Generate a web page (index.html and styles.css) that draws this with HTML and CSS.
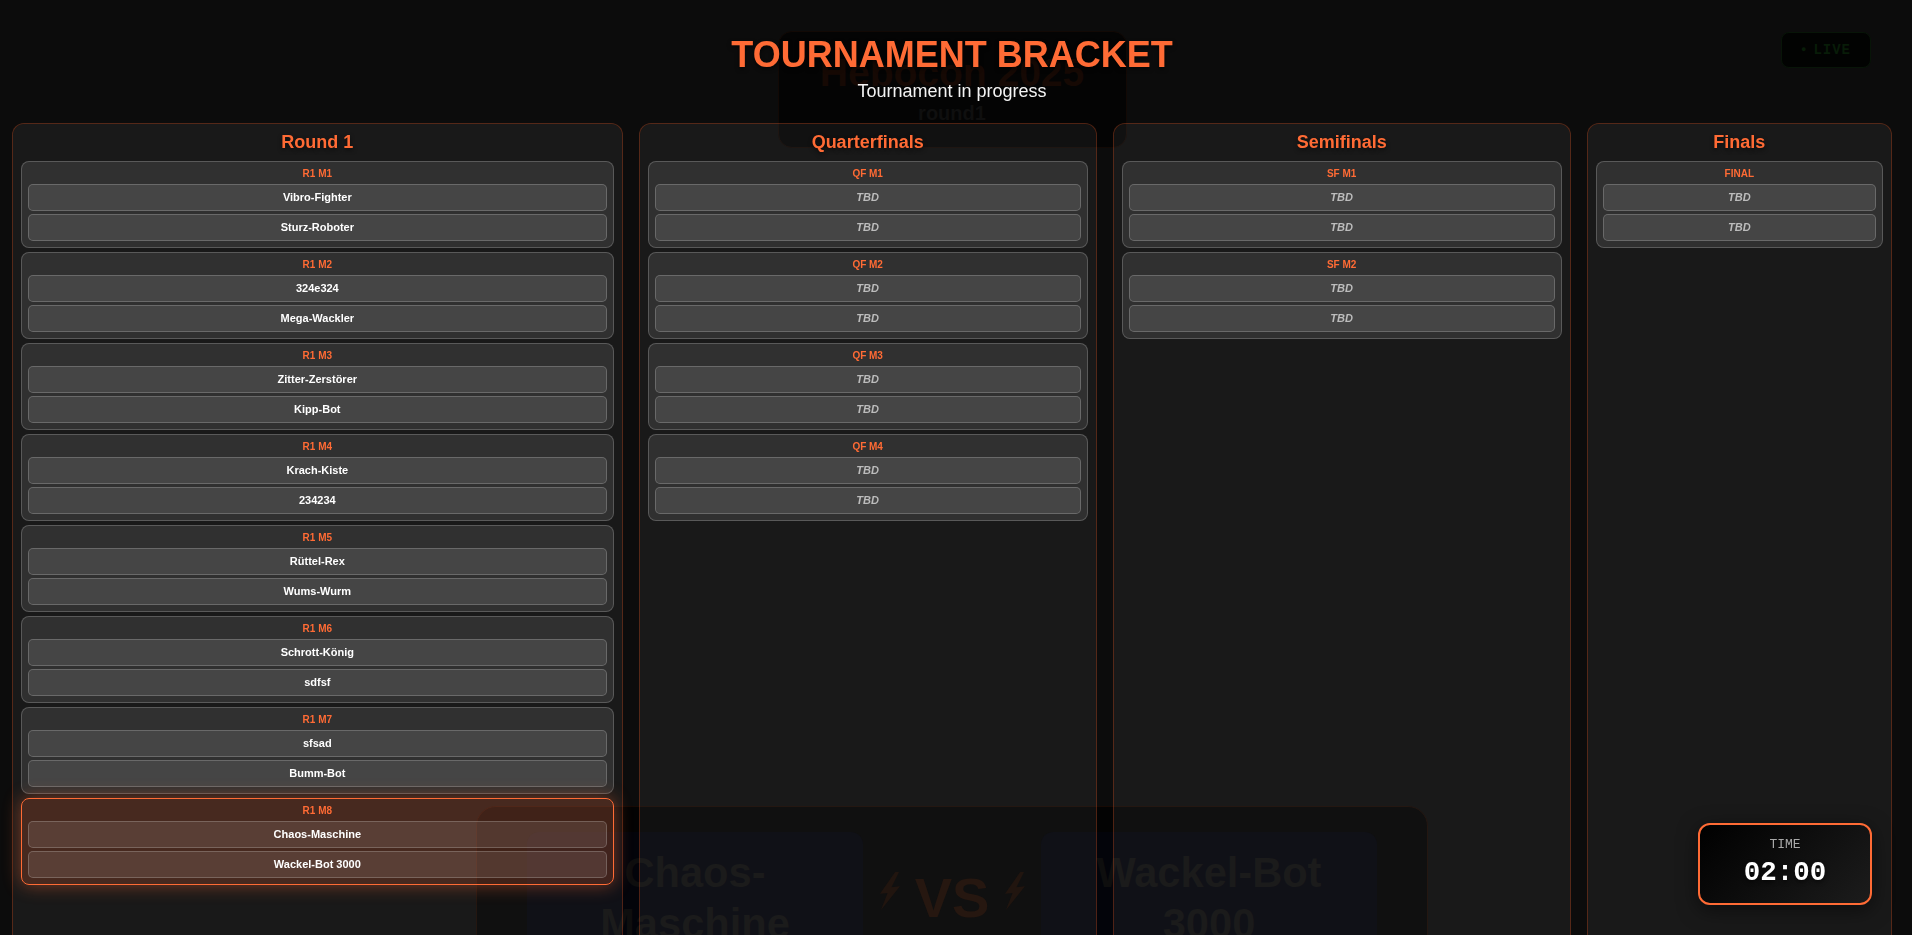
FILE: index.html
```html
<!DOCTYPE html>
<html lang="de">
<head>
<meta charset="utf-8">
<title>Hebocon 2025 – Tournament Bracket</title>
<link rel="stylesheet" href="styles.css">
</head>
<body>
  <div class="stage">
    <div class="live-badge"><span class="live-dot">●</span><span>LIVE</span></div>
    <div class="event-box">
      <div class="event-name">Hebocon 2025</div>
      <div class="event-round">round1</div>
    </div>
    <div class="versus">
      <div class="fighter"><div class="fighter-name">Chaos-Maschine</div></div>
      <div class="vs-mark">
        <svg class="bolt" viewBox="0 0 30 40" aria-hidden="true"><polygon points="21,0 5,23 13,22 6,40 26,15 17,16 25,0"/></svg>
        <span class="vs-text">VS</span>
        <svg class="bolt" viewBox="0 0 30 40" aria-hidden="true"><polygon points="21,0 5,23 13,22 6,40 26,15 17,16 25,0"/></svg>
      </div>
      <div class="fighter"><div class="fighter-name">Wackel-Bot 3000</div></div>
    </div>
  </div>

  <div class="overlay">
    <header class="bracket-header">
      <h1 class="bracket-title">TOURNAMENT BRACKET</h1>
      <p class="bracket-status">Tournament in progress</p>
    </header>
    <div class="bracket">
      <section class="round">
        <h2 class="round-title">Round 1</h2>
        <div class="match"><div class="match-label">R1 M1</div><div class="slot">Vibro-Fighter</div><div class="slot">Sturz-Roboter</div></div>
        <div class="match"><div class="match-label">R1 M2</div><div class="slot">324e324</div><div class="slot">Mega-Wackler</div></div>
        <div class="match"><div class="match-label">R1 M3</div><div class="slot">Zitter-Zerstörer</div><div class="slot">Kipp-Bot</div></div>
        <div class="match"><div class="match-label">R1 M4</div><div class="slot">Krach-Kiste</div><div class="slot">234234</div></div>
        <div class="match"><div class="match-label">R1 M5</div><div class="slot">Rüttel-Rex</div><div class="slot">Wums-Wurm</div></div>
        <div class="match"><div class="match-label">R1 M6</div><div class="slot">Schrott-König</div><div class="slot">sdfsf</div></div>
        <div class="match"><div class="match-label">R1 M7</div><div class="slot">sfsad</div><div class="slot">Bumm-Bot</div></div>
        <div class="match match-active"><div class="match-label">R1 M8</div><div class="slot">Chaos-Maschine</div><div class="slot">Wackel-Bot 3000</div></div>
      </section>
      <section class="round">
        <h2 class="round-title">Quarterfinals</h2>
        <div class="match"><div class="match-label">QF M1</div><div class="slot slot-tbd">TBD</div><div class="slot slot-tbd">TBD</div></div>
        <div class="match"><div class="match-label">QF M2</div><div class="slot slot-tbd">TBD</div><div class="slot slot-tbd">TBD</div></div>
        <div class="match"><div class="match-label">QF M3</div><div class="slot slot-tbd">TBD</div><div class="slot slot-tbd">TBD</div></div>
        <div class="match"><div class="match-label">QF M4</div><div class="slot slot-tbd">TBD</div><div class="slot slot-tbd">TBD</div></div>
      </section>
      <section class="round">
        <h2 class="round-title">Semifinals</h2>
        <div class="match"><div class="match-label">SF M1</div><div class="slot slot-tbd">TBD</div><div class="slot slot-tbd">TBD</div></div>
        <div class="match"><div class="match-label">SF M2</div><div class="slot slot-tbd">TBD</div><div class="slot slot-tbd">TBD</div></div>
      </section>
      <section class="round">
        <h2 class="round-title">Finals</h2>
        <div class="match"><div class="match-label">FINAL</div><div class="slot slot-tbd">TBD</div><div class="slot slot-tbd">TBD</div></div>
      </section>
    </div>
  </div>

  <div class="timer">
    <div class="timer-label">TIME</div>
    <div class="timer-value">02:00</div>
  </div>
</body>
</html>
```

FILE: styles.css
```css
* { box-sizing: border-box; }

html, body {
  margin: 0;
  height: 100%;
}

body {
  background: #0c0c0c;
  color: #fff;
  font-family: "Liberation Sans", Arial, sans-serif;
  overflow: hidden;
}

/* ---------- dimmed main screen underneath ---------- */
.stage {
  position: relative;
  width: calc(100% - 8px);
  height: 100vh;
  display: flex;
  flex-direction: column;
  align-items: center;
}

.live-badge {
  position: absolute;
  top: 32px;
  right: 33px;
  width: 90px;
  height: 36px;
  display: flex;
  align-items: center;
  justify-content: center;
  gap: 6px;
  border: 1px solid #081508;
  border-radius: 8px;
  background: #020302;
  color: #081c08;
  font-family: "Liberation Mono", monospace;
  font-size: 14px;
  font-weight: bold;
  letter-spacing: 1px;
}

.live-dot { font-size: 9px; }

.event-box {
  flex-shrink: 0;
  margin-top: 31px;
  width: 349px;
  height: 117px;
  padding-top: 18px;
  border: 1px solid #120905;
  border-radius: 14px;
  background: #040404;
  text-align: center;
}

.event-name {
  font-size: 39px;
  line-height: 46px;
  font-weight: bold;
  color: #160904;
  margin-bottom: 5px;
}

.event-round {
  font-size: 20px;
  line-height: 24px;
  font-weight: bold;
  color: #0f0f0f;
}

.versus {
  flex-shrink: 0;
  margin-top: 658px;
  width: 952px;
  height: 320px;
  display: flex;
  padding: 25px 50px;
  border: 1px solid #180a04;
  border-radius: 20px;
  background: #030303;
}

.fighter {
  width: 336px;
  padding: 15px 20px;
  border-radius: 12px;
  background: #03040a;
  text-align: center;
}

.fighter-name {
  font-size: 41.6px;
  line-height: 51px;
  font-weight: bold;
  color: #0e0e0e;
}

.vs-mark {
  flex: 1;
  display: flex;
  justify-content: center;
  align-items: flex-start;
  gap: 11px;
  padding-top: 34px;
}

.vs-text {
  font-size: 56px;
  line-height: 64px;
  font-weight: bold;
  color: #1a0a03;
}

.bolt {
  width: 29px;
  height: 38px;
  margin-top: 6px;
  fill: #150802;
}

/* ---------- bracket overlay ---------- */
.overlay {
  position: fixed;
  inset: 0;
  z-index: 10;
  display: flex;
  flex-direction: column;
  padding: 34px 20px 0 12px;
  overflow: hidden;
}

.bracket-header {
  text-align: center;
  margin-bottom: 21px;
}

.bracket-title {
  margin: 0 0 4px;
  font-size: 36px;
  line-height: 42px;
  font-weight: bold;
  color: #ff6b35;
  text-shadow: 0 2px 4px rgba(0, 0, 0, 0.6);
}

.bracket-status {
  margin: 0;
  font-size: 18px;
  line-height: 22px;
  color: #f4f4f4;
}

.bracket {
  display: grid;
  grid-template-columns: 2fr 1.5fr 1.5fr 1fr;
  gap: 16px;
  height: 840px;
  flex-shrink: 0;
}

.round {
  min-width: 0;
  padding: 8px;
  border: 1px solid rgba(255, 107, 53, 0.3);
  border-radius: 12px;
  background: rgba(255, 255, 255, 0.055);
  background-clip: padding-box;
}

.round-title {
  margin: 0 0 9px;
  text-align: center;
  font-size: 18px;
  line-height: 20px;
  font-weight: bold;
  color: #ff6b35;
  text-shadow: 0 2px 4px rgba(0, 0, 0, 0.5);
}

.match {
  margin-bottom: 4px;
  padding: 6px;
  border: 1px solid rgba(255, 255, 255, 0.2);
  border-radius: 8px;
  background: rgba(255, 255, 255, 0.1);
}

.match-label {
  margin-bottom: 4px;
  text-align: center;
  font-size: 10px;
  line-height: 12px;
  font-weight: bold;
  color: #ff6b35;
}

.slot {
  padding: 6px;
  border: 1px solid rgba(255, 255, 255, 0.2);
  border-radius: 5px;
  background: rgba(255, 255, 255, 0.1);
  text-align: center;
  font-size: 11px;
  line-height: 13px;
  font-weight: bold;
  color: #fff;
}

.slot + .slot { margin-top: 3px; }

.slot-tbd {
  font-style: italic;
  color: #bcbcbc;
}

.match-active {
  border-color: #ff6b35;
  background: rgba(255, 107, 53, 0.2);
  box-shadow: 0 0 18px rgba(255, 107, 53, 0.45);
}

/* ---------- timer ---------- */
.timer {
  position: fixed;
  right: 40px;
  bottom: 30px;
  z-index: 20;
  width: 174px;
  height: 82px;
  padding-top: 13px;
  border: 2px solid #ff6b35;
  border-radius: 12px;
  background: linear-gradient(135deg, #000 0%, #1c1c1c 100%);
  box-shadow: 0 5px 20px rgba(0, 0, 0, 0.5);
  text-align: center;
  font-family: "Liberation Mono", monospace;
}

.timer-label {
  margin-bottom: 5px;
  font-size: 13px;
  line-height: 14px;
  color: #a8a8a8;
}

.timer-value {
  font-size: 27.5px;
  line-height: 32px;
  font-weight: bold;
  color: #fff;
  text-shadow: 0 2px 4px rgba(0, 0, 0, 0.6);
}
```
